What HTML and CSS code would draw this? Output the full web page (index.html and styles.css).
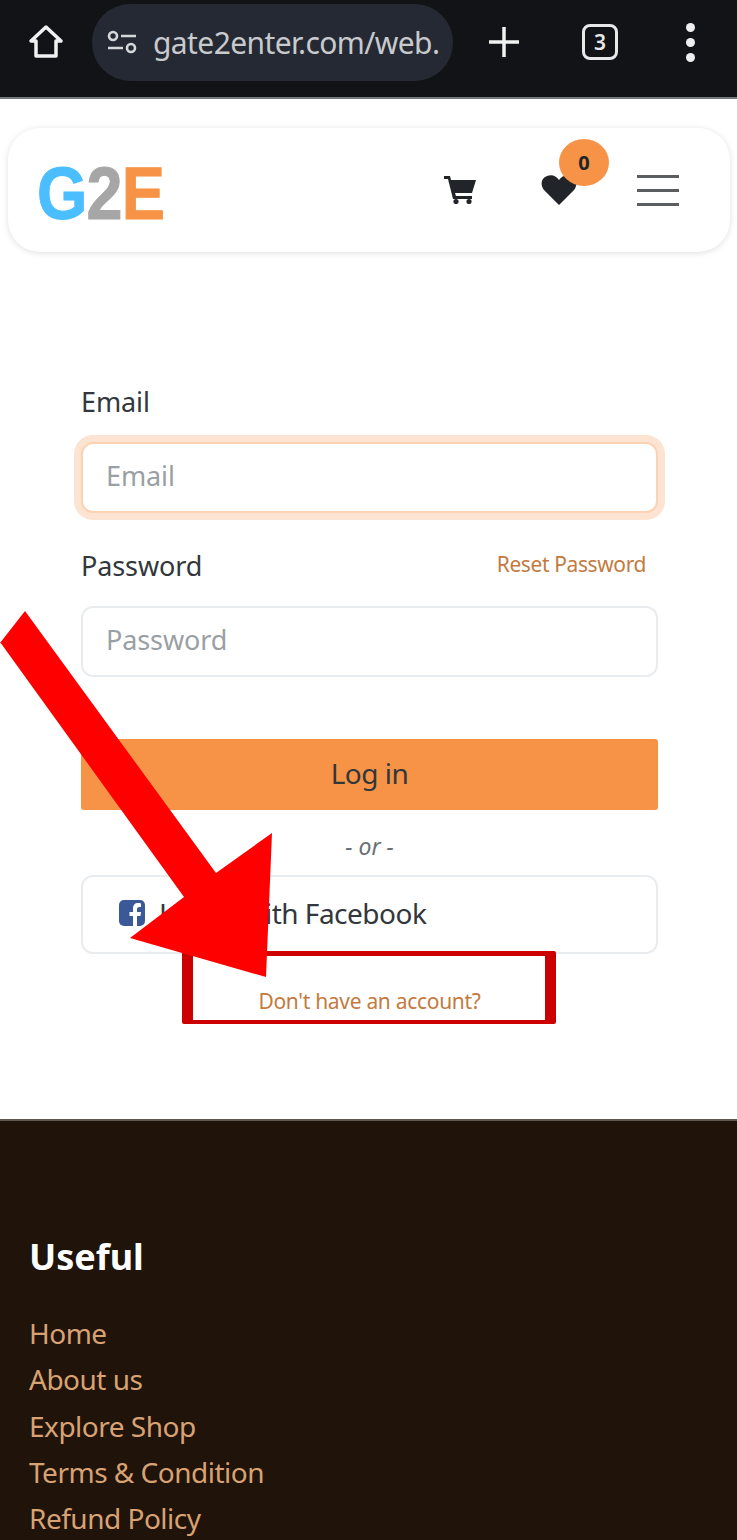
FILE: index.html
```html
<!DOCTYPE html>
<html lang="en">
<head>
  <meta charset="UTF-8" />
  <title>Login</title>
  <meta name="viewport" content="width=device-width, initial-scale=1.0" />
  <link rel="stylesheet" href="styles.css">
</head>
<body>
  <!-- BROWSER BAR -->
  <div class="browser-bar">
    <svg class="home-icon" viewBox="0 0 36 36"><path d="M18 3 L33 17 H28 V32 H8 V17 H3 Z" /></svg>
    <div class="url-pill">
      <svg class="tune-icon" viewBox="0 0 30 24"><circle cx="6" cy="6" r="4" /><path d="M14 6 H29" /><path d="M1 18 H16" /><circle cx="24" cy="18" r="4" /></svg>
      <span class="url-text">gate2enter.com/web.</span>
    </div>
    <svg class="plus-icon" viewBox="0 0 32 32"><path d="M16 1 V31 M1 16 H31" /></svg>
    <div class="tab-count">3</div>
    <div class="more-dots"><i></i><i></i><i></i></div>
  </div>

  <!-- HEADER CARD -->
  <div class="page-top">
    <header class="site-header">
      <div class="logo"><span class="logo-g">G</span><span class="logo-2">2</span><span class="logo-e">E</span></div>
      <div class="header-actions">
        <svg class="cart-icon" viewBox="0 0 32 28"><path d="M0 0 H6 L7 4 H32 L28 17 H11 L12 20 H28 V23 H9 L4 3 H0 Z" /><circle cx="12" cy="25.5" r="2.6" /><circle cx="25" cy="25.5" r="2.6" /></svg>
        <div class="wish">
          <svg class="heart-icon" viewBox="0 0 36 30"><path d="M18 30 L3 15 C-1 10 0 3 6 1 C11 -1 15 1 18 5 C21 1 25 -1 30 1 C36 3 37 10 33 15 Z" /></svg>
          <span class="wish-badge">0</span>
        </div>
        <div class="hamburger"><i></i><i></i><i></i></div>
      </div>
    </header>
  </div>

  <!-- LOGIN FORM -->
  <main class="login-form">
    <label class="field-label">Email</label>
    <div class="input input-focus">Email</div>
    <div class="label-row">
      <label class="field-label">Password</label>
      <a class="reset-link">Reset Password</a>
    </div>
    <div class="input">Password</div>
    <button class="login-btn" type="button">Log in</button>
    <div class="or-line">- or -</div>
    <button class="fb-btn" type="button">
      <svg class="fb-icon" viewBox="0 0 26 26"><rect width="26" height="26" rx="5" /><path d="M18 26 V16 H21.5 L22 12 H18 V9.5 C18 8 18.6 7 20.3 7 H22 V3.4 C21 3.2 20 3.1 19 3.1 C16 3.1 14 5 14 8.7 V12 H10.5 V16 H14 V26 Z" /></svg>
      Log in with Facebook
    </button>
    <a class="signup-link">Don't have an account?</a>
  </main>

  <!-- FOOTER -->
  <footer class="site-footer">
    <h3 class="footer-title">Useful</h3>
    <a>Home</a>
    <a>About us</a>
    <a>Explore Shop</a>
    <a>Terms &amp; Condition</a>
    <a>Refund Policy</a>
  </footer>

  <!-- ANNOTATION -->
  <div class="note-box"></div>
  <svg class="note-arrow" viewBox="0 0 300 400"><polygon points="0,32 25,0 216,262 272,222 266,366 130,327 184,286 0,31" /></svg>
</body>
</html>
```

FILE: styles.css
```css
html, body {
  margin: 0;
  padding: 0;
  background: #fff;
  font-family: 'Noto Sans', 'Open Sans', Arial, sans-serif;
}
body {
  position: relative;
  height: 1540px;
  overflow: hidden;
  color: #32373b;
}

/* browser bar */
.browser-bar {
  display: flex;
  align-items: center;
  height: 99px;
  box-sizing: border-box;
  padding-bottom: 13px;
  background: #111317;
  border-bottom: 2px solid #77787c;
}
.home-icon {
  width: 36px;
  height: 36px;
  margin-left: 28px;
  fill: none;
  stroke: #f1f1f1;
  stroke-width: 3.5;
  stroke-linejoin: round;
}
.url-pill {
  display: flex;
  align-items: center;
  width: 361px;
  height: 77px;
  margin-left: 28px;
  border-radius: 38px;
  background: #242933;
  overflow: hidden;
}
.tune-icon {
  width: 30px;
  height: 24px;
  margin-left: 15px;
  flex: none;
  fill: none;
  stroke: #d5d7da;
  stroke-width: 2.6;
}
.url-text {
  margin-left: 16px;
  font-size: 30px;
  color: #c8cacd;
  letter-spacing: -0.6px;
  white-space: nowrap;
}
.plus-icon {
  width: 32px;
  height: 32px;
  margin-left: 35px;
  flex: none;
  fill: none;
  stroke: #f1f1f1;
  stroke-width: 3.5;
}
.tab-count {
  width: 30px;
  height: 30px;
  margin-left: 62px;
  border: 3px solid #e8e8e8;
  border-radius: 8px;
  color: #e8e8e8;
  font-size: 21px;
  font-weight: 600;
  line-height: 30px;
  text-align: center;
}
.more-dots {
  display: flex;
  flex-direction: column;
  gap: 6px;
  margin-left: 68px;
}
.more-dots i {
  width: 9px;
  height: 9px;
  border-radius: 50%;
  background: #eee;
}

/* header */
.page-top {
  padding: 29px 7px 0 8px;
}
.site-header {
  display: flex;
  align-items: center;
  justify-content: space-between;
  height: 124px;
  box-sizing: border-box;
  padding: 0 51px 0 29px;
  border-radius: 32px;
  background: #fff;
  box-shadow: 0 1px 6px rgba(0,0,0,0.13);
}
.logo {
  margin-top: 8px;
  font-family: 'Liberation Sans', Arial, sans-serif;
  font-size: 74px;
  font-weight: 700;
  line-height: 1;
  letter-spacing: -1px;
  -webkit-text-stroke: 1px currentColor;
  transform: scaleX(0.875);
  transform-origin: left center;
}
.logo-g { color: #4bbeff; }
.logo-2 { color: #a6a6a6; }
.logo-e { color: #f79346; }
.header-actions {
  display: flex;
  align-items: center;
}
.cart-icon {
  width: 32px;
  height: 28px;
  fill: #212529;
}
.wish {
  position: relative;
  width: 36px;
  height: 30px;
  margin-left: 65px;
}
.heart-icon {
  display: block;
  width: 36px;
  height: 30px;
  fill: #212529;
}
.wish-badge {
  position: absolute;
  left: 18px;
  top: -36px;
  width: 50px;
  height: 47px;
  border-radius: 50%;
  background: #f79346;
  font-size: 20px;
  font-weight: 700;
  line-height: 47px;
  text-align: center;
  color: #212529;
}
.hamburger {
  display: flex;
  flex-direction: column;
  gap: 11px;
  width: 42px;
  margin-left: 60px;
}
.hamburger i {
  height: 3px;
  background: #5b5e60;
}

/* form */
.login-form {
  display: flex;
  flex-direction: column;
  height: 867px;
  box-sizing: border-box;
  padding: 128px 79px 0 81px;
}
.field-label {
  font-size: 27px;
  line-height: 44px;
  letter-spacing: -0.1px;
  color: #32373b;
}
.input {
  height: 71px;
  box-sizing: border-box;
  padding-left: 23px;
  border: 2px solid #e9ecee;
  border-radius: 12px;
  background: #fff;
  font-size: 27px;
  line-height: 63px;
  letter-spacing: -0.1px;
  color: #9a9fa4;
}
.input-focus {
  margin-top: 18px;
  border-color: #fbd3b4;
  box-shadow: 0 0 0 7px #fce3d2;
}
.label-row {
  display: flex;
  align-items: center;
  justify-content: space-between;
  margin-top: 31px;
  margin-bottom: 18px;
}
.reset-link {
  margin-right: 12px;
  margin-top: -4px;
  font-size: 21px;
  letter-spacing: -0.4px;
  color: #c47a3e;
}
.login-btn {
  height: 71px;
  margin-top: 62px;
  padding: 0 0 3px;
  border: none;
  border-radius: 3px;
  background: #f79346;
  font-family: inherit;
  font-size: 28px;
  letter-spacing: -0.5px;
  color: #32373b;
}
.or-line {
  margin-top: 19px;
  font-size: 23px;
  line-height: 34px;
  font-style: italic;
  text-align: center;
  color: #6c7074;
}
.fb-btn {
  display: flex;
  align-items: center;
  height: 79px;
  margin-top: 12px;
  padding: 0 0 4px 36px;
  border: 2px solid #e9ecee;
  border-radius: 12px;
  background: #fff;
  font-family: inherit;
  font-size: 28px;
  letter-spacing: -0.5px;
  color: #32373b;
}
.fb-icon {
  width: 26px;
  height: 26px;
  margin-right: 14px;
}
.fb-icon rect { fill: #3b5998; }
.fb-icon path { fill: #fff; }
.signup-link {
  margin-top: 32px;
  font-size: 21px;
  line-height: 30px;
  letter-spacing: -0.3px;
  text-align: center;
  color: #c47a3e;
}

/* footer */
.site-footer {
  display: flex;
  flex-direction: column;
  height: 421px;
  box-sizing: border-box;
  padding: 112px 29px 0;
  border-top: 2px solid #5f5853;
  background: #1f130a;
}
.footer-title {
  margin: 0 0 29px;
  font-size: 36px;
  line-height: 48px;
  font-weight: 700;
  color: #fff;
}
.site-footer a {
  font-size: 28px;
  line-height: 46.3px;
  letter-spacing: -0.5px;
  color: #d9a273;
}

/* annotation on top of the page */
.note-box {
  position: absolute;
  left: 182px;
  top: 951px;
  width: 374px;
  height: 73px;
  box-sizing: border-box;
  border-style: solid;
  border-color: #cc0000;
  border-width: 5px 11px 4px;
  border-radius: 2px;
}
.note-arrow {
  position: absolute;
  left: 0;
  top: 611px;
  width: 300px;
  height: 400px;
  fill: #ff0000;
}
```
